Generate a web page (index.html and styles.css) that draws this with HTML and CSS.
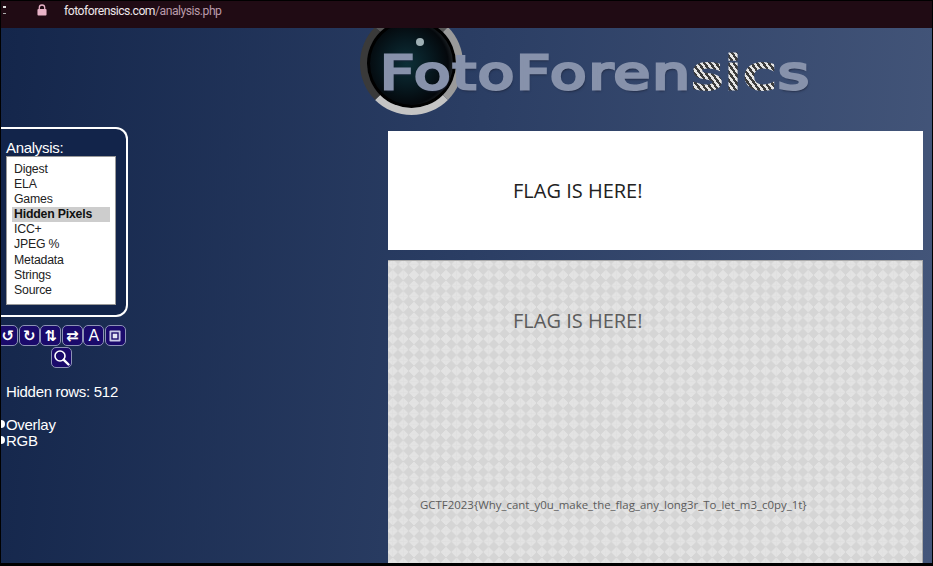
FILE: index.html
```html
<!DOCTYPE html>
<html>
<head>
    <title>FotoForensics - Analysis</title>
    <link rel="stylesheet" href="styles.css">
</head>
<body>
    <div class="frame">
        <div class="addressbar">
            <span class="nav-mark"></span>
            <svg class="lock" width="10" height="12" viewBox="0 0 11 13">
                <path d="M2.5 6V4a3 3 0 0 1 6 0v2" fill="none" stroke="#e9b3c8" stroke-width="1.4"/>
                <rect x="0.5" y="5.5" width="10" height="7" rx="1" fill="#e9b3c8"/>
            </svg>
            <span class="url">fotoforensics.com<span class="url-path">/analysis.php</span></span>
        </div>
        <div class="page">
            <div class="sidebar">
                <div class="analysis-box">
                    <div class="analysis-title">Analysis:</div>
                    <ul class="analysis-list">
                        <li>Digest</li>
                        <li>ELA</li>
                        <li>Games</li>
                        <li class="selected">Hidden Pixels</li>
                        <li>ICC+</li>
                        <li>JPEG %</li>
                        <li>Metadata</li>
                        <li>Strings</li>
                        <li>Source</li>
                    </ul>
                </div>
                <div class="tools">
                    <button class="tool">↺</button>
                    <button class="tool">↻</button>
                    <button class="tool">⇅</button>
                    <button class="tool">⇄</button>
                    <button class="tool tool-letter">A</button>
                    <button class="tool">
                        <svg width="12" height="12" viewBox="0 0 13 13">
                            <rect x="0.5" y="0.5" width="12" height="12" rx="1" fill="#c9c9e6"/>
                            <rect x="2.5" y="2.5" width="8" height="8" fill="#1a0a6b"/>
                            <rect x="4" y="4" width="5" height="5" fill="#e6e6f4"/>
                        </svg>
                    </button>
                    <button class="tool">
                        <svg width="17" height="17" viewBox="0 0 17 17">
                            <circle cx="7" cy="7" r="5" fill="none" stroke="#fff" stroke-width="1.6"/>
                            <path d="M10.8 10.8 15.5 15.5" stroke="#fff" stroke-width="2.4" stroke-linecap="round"/>
                        </svg>
                    </button>
                </div>
                <div class="hidden-rows">Hidden rows: 512</div>
                <label class="radio-row"><span class="radio"></span>Overlay</label>
                <label class="radio-row"><span class="radio"></span>RGB</label>
            </div>
            <div class="main">
                <div class="logo">
                    <div class="lens"><span class="lens-glint"></span></div>
                    <div class="logo-text">FotoForen<span class="logo-rope">sic</span>s</div>
                </div>
                <div class="panel panel-white">
                    <div class="flag-heading">FLAG IS HERE!</div>
                </div>
                <div class="panel panel-check">
                    <div class="flag-heading">FLAG IS HERE!</div>
                    <div class="flag-value">GCTF2023{Why_cant_y0u_make_the_flag_any_long3r_To_let_m3_c0py_1t}</div>
                </div>
            </div>
        </div>
    </div>
</body>
</html>
```

FILE: styles.css
```css
html, body {
    margin: 0;
    padding: 0;
    height: 100%;
    background-color: #000;
}
.frame {
    box-sizing: border-box;
    width: 933px;
    height: 566px;
    border: 1px solid #000;
    border-bottom-width: 3px;
    overflow: hidden;
    display: flex;
    flex-direction: column;
    font-family: "Liberation Sans", Arial, sans-serif;
}
.addressbar {
    position: relative;
    z-index: 2;
    flex: 0 0 27px;
    background-color: #200b14;
    display: flex;
    align-items: flex-start;
    padding-top: 3px;
    box-sizing: border-box;
}
.nav-mark {
    width: 3px;
    height: 8px;
    margin: 2px 0 0 2px;
    border-top: 2px solid #ddd;
    border-bottom: 1px dashed #aaa;
    box-sizing: border-box;
}
.lock {
    margin: 0 0 0 31px;
}
.url {
    margin-left: 17px;
    font-family: Roboto, "Liberation Sans", sans-serif;
    font-size: 12.2px;
    letter-spacing: -0.5px;
    line-height: 15px;
    color: #eee6ea;
}
.url-path {
    color: #b99aa9;
}
.page {
    flex: 1;
    display: flex;
    min-height: 0;
    background: linear-gradient(95deg, #14264b 0%, #2b3e64 50%, #44567a 100%);
}
.sidebar {
    flex: 0 0 387px;
    color: #fff;
    font-size: 15px;
    letter-spacing: -0.3px;
}
.analysis-box {
    box-sizing: border-box;
    width: 127px;
    height: 190px;
    margin-top: 99px;
    padding: 11px 0 0 5px;
    border: 2px solid #fff;
    border-left: none;
    border-radius: 0 12px 12px 0;
    background-color: #12244a;
}
.analysis-title {
    line-height: 16px;
}
.analysis-list {
    box-sizing: border-box;
    list-style: none;
    width: 110px;
    height: 149px;
    margin: 0;
    padding: 5px 5px 0;
    background-color: #fff;
    border: 1px solid #999;
    color: #222;
    font-size: 12.3px;
    letter-spacing: -0.2px;
}
.analysis-list li {
    height: 15.1px;
    line-height: 15.1px;
    padding-left: 2px;
}
.analysis-list .selected {
    background-color: #cdcdcd;
    font-weight: bold;
    color: #111;
}
.tools {
    display: flex;
    flex-wrap: wrap;
    justify-content: center;
    gap: 1px 0.5px;
    width: 129px;
    margin: 8px 0 0 -4px;
}
.tool {
    box-sizing: border-box;
    width: 21px;
    height: 21px;
    padding: 0;
    display: flex;
    align-items: center;
    justify-content: center;
    background-color: #1a0a6b;
    border: 1px solid #8d93b5;
    border-radius: 5px;
    color: #fff;
    font-family: "DejaVu Sans", sans-serif;
    font-size: 15px;
    font-weight: bold;
}
.tool-letter {
    font-family: "Liberation Sans", Arial, sans-serif;
    font-size: 16px;
    font-weight: normal;
}
.hidden-rows {
    margin: 15px 0 15px 5px;
    line-height: 18px;
}
.radio-row {
    display: flex;
    align-items: center;
    height: 16px;
    padding-left: 5px;
}
.radio {
    width: 8px;
    height: 8px;
    margin: 0 1px 0 -9px;
    background-color: #fff;
    border-radius: 50%;
}
.main {
    flex: 1;
    min-width: 0;
}
.logo {
    position: relative;
    height: 103px;
}
.lens {
    position: absolute;
    left: -28px;
    top: -16px;
    box-sizing: border-box;
    width: 103px;
    height: 103px;
    border-radius: 50%;
    border: 7px solid #8b8b8b;
    border-top-color: #555;
    border-left-color: #3a3a3a;
    border-bottom-color: #c4c4c4;
    border-right-color: #9a9a9a;
    box-shadow: inset 0 0 0 3px #000;
    background: radial-gradient(circle at 45% 50%, #0d3038 0%, #071a21 35%, #04080c 62%, #3b4044 80%, #000 90%);
}
.lens-glint {
    position: absolute;
    left: 49px;
    top: 19px;
    width: 8px;
    height: 8px;
    border-radius: 50%;
    background-color: #9fb0b5;
}
.logo-text {
    position: absolute;
    left: -8px;
    top: 15px;
    transform: scaleX(1.268);
    transform-origin: left center;
    font-family: "DejaVu Sans", sans-serif;
    font-size: 47px;
    line-height: 60px;
    letter-spacing: 1.5px;
    white-space: nowrap;
    color: #8792ab;
    -webkit-text-stroke: 3px #8792ab;
    text-shadow: 1px 2px 2px #1b2238;
}
.logo-rope {
    -webkit-text-stroke: 3px transparent;
    text-shadow: none;
    background: repeating-linear-gradient(60deg, #e4e4e4 0 2px, #3c3c3c 2px 4px);
    -webkit-background-clip: text;
    background-clip: text;
    -webkit-text-fill-color: transparent;
}
.panel {
    box-sizing: border-box;
    width: 535px;
    padding-left: 125px;
    color: #222;
}
.panel-white {
    height: 119px;
    padding-top: 46px;
    margin-bottom: 10px;
    background-color: #fff;
}
.panel-check {
    height: 304px;
    padding-top: 46px;
    border-top: 1px solid #aaa;
    border-right: 1px solid #aaa;
    background-color: #d5d5d5;
    background-image:
        linear-gradient(45deg, #e3e3e3 25%, transparent 25%, transparent 75%, #e3e3e3 75%),
        linear-gradient(135deg, #e3e3e3 25%, transparent 25%, transparent 75%, #e3e3e3 75%);
    background-size: 10.67px 10.67px;
    background-position: 4.67px 3.4px;
    color: #5c5c5c;
}
.flag-heading {
    font-family: "Open Sans", sans-serif;
    font-size: 20px;
    line-height: 28px;
    white-space: nowrap;
}
.flag-value {
    margin: 162px 0 0 -93px;
    font-family: "Open Sans", sans-serif;
    font-size: 11.45px;
    line-height: 16px;
    white-space: nowrap;
    color: #5c5c5c;
}
```
